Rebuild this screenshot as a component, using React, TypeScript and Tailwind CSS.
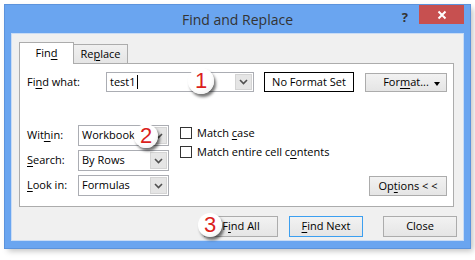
import React from 'react';

function Chevron() {
  return (
    <svg width="9" height="6" viewBox="0 0 9 6" fill="none">
      <path d="M1 1l3.5 3.5L8 1" stroke="#505050" strokeWidth="1.6" />
    </svg>
  );
}

function Combo({ value, width, height, caret }: { value: string; width: string; height: string; caret?: boolean }) {
  return (
    <div className={`${width} ${height} flex bg-white border border-[#abadb3]`}>
      <div className="flex-1 flex items-center pl-[3px] text-black">
        {value}
        {caret && <span className="ml-[1px] w-px h-[14px] bg-black" />}
      </div>
      <div className="w-[17px] my-[1px] mr-[1px] flex items-center justify-center bg-[#e5e5e5] border border-[#d4d4d4]">
        <Chevron />
      </div>
    </div>
  );
}

function Button({ children, className, primary }: { children: React.ReactNode; className: string; primary?: boolean }) {
  return (
    <div
      className={`${className} flex items-center justify-center bg-gradient-to-b from-[#f2f2f2] to-[#e5e5e5] border ${
        primary ? 'border-[#3c9ff0]' : 'border-[#acacac]'
      }`}
    >
      {children}
    </div>
  );
}

function Badge({ n, className }: { n: string; className: string }) {
  return (
    <div
      className={`absolute ${className} rounded-full flex items-center justify-center bg-[radial-gradient(circle_at_40%_35%,#ffffff_55%,#e6e6e6)] shadow-[2px_3px_3px_rgba(0,0,0,0.55)] font-['Liberation_Sans',sans-serif] text-[22px] leading-none text-[#db1f1d]`}
    >
      {n}
    </div>
  );
}

export default function App() {
  return (
    <div className="relative w-[475px] h-[260px] bg-white pt-[5px] pl-[5px] font-['Open_Sans',sans-serif] text-[11px] text-black">
      <div className="w-[465px] h-[243px] flex flex-col bg-[#6aa5f0] shadow-[0_0_0_1px_#5c93dc,3px_3px_6px_rgba(0,0,0,0.25)]">
        {/* title bar */}
        <div className="h-[29px] grid grid-cols-[1fr_auto_1fr]">
          <div />
          <div className="flex items-center text-[14px] text-[#333]">Find and Replace</div>
          <div className="flex justify-end items-start">
            <span className="mt-[3px] mr-[11px] text-[13px] font-bold text-[#333]">?</span>
            <div className="w-[45px] h-[19px] mr-[6px] bg-[#c75050] flex items-center justify-center">
              <svg width="10" height="10" viewBox="0 0 10 10">
                <path d="M1.5 1.5l7 7M8.5 1.5l-7 7" stroke="white" strokeWidth="2" />
              </svg>
            </div>
          </div>
        </div>

        {/* body */}
        <div className="mx-[7px] h-[206px] flex flex-col bg-[#f0f0f0] shadow-[0_0_0_1px_#c9dcf5]">
          <div className="pt-[8px] pl-[7px] flex items-end">
            <div className="relative z-10 -mb-px w-[55px] h-[22px] flex items-center justify-center bg-white border border-b-0 border-[#acacac]">
              Fin<u className="underline-offset-2">d</u>
            </div>
            <div className="w-[54px] h-[19px] flex items-center justify-center bg-gradient-to-b from-[#f0f0f0] to-[#e5e5e5] border border-l-0 border-b-0 border-[#acacac]">
              Re<u className="underline-offset-2">p</u>lace
            </div>
          </div>

          <div className="ml-[7px] w-[435px] h-[144px] flex flex-col bg-white border border-[#acacac]">
            <div className="pt-[8px] pl-[7px] flex items-center">
              <div className="w-[79px]">
                Fi<u className="underline-offset-2">n</u>d what:
              </div>
              <Combo value="test1" width="w-[148px]" height="h-[20px]" caret />
              <div className="ml-[10px] w-[90px] h-[20px] flex items-center justify-center border border-black">
                No Format Set
              </div>
              <Button className="ml-[11px] w-[82px] h-[19px] relative">
                For<u className="underline-offset-2">m</u>at...
                <span className="absolute right-[6px] top-[8px] border-x-[3px] border-t-[4px] border-x-transparent border-t-black" />
              </Button>
            </div>

            <div className="mt-[33px] pl-[7px] flex">
              <div className="flex flex-col gap-[4px]">
                {[
                  ['Wit', 'h', 'in:', 'Workbook'],
                  ['', 'S', 'earch:', 'By Rows'],
                  ['', 'L', 'ook in:', 'Formulas'],
                ].map(([a, u, b, v]) => (
                  <div key={v} className="flex items-center">
                    <div className="w-[51px]">
                      {a}
                      <u className="underline-offset-2">{u}</u>
                      {b}
                    </div>
                    <Combo value={v} width="w-[91px]" height="h-[21px]" />
                  </div>
                ))}
              </div>

              <div className="flex-1 ml-[11px] flex flex-col">
                <div className="h-[16px] flex items-center">
                  <span className="w-[12px] h-[12px] border border-[#333] bg-white" />
                  <span className="ml-[5px]">
                    Match <u className="underline-offset-2">c</u>ase
                  </span>
                </div>
                <div className="mt-[3px] h-[16px] flex items-center">
                  <span className="w-[12px] h-[12px] border border-[#333] bg-white" />
                  <span className="ml-[5px]">
                    Match entire cell c<u className="underline-offset-2">o</u>ntents
                  </span>
                </div>
                <Button className="mt-auto self-end mr-[6px] w-[78px] h-[20px]">
                  Op<u className="underline-offset-2">t</u>ions &lt; &lt;
                </Button>
              </div>
            </div>
          </div>

          <div className="mt-[9px] pr-[6px] flex justify-end">
            <Button className="w-[74px] h-[21px]">
              F<u className="underline-offset-2">i</u>nd All
            </Button>
            <Button className="ml-[11px] w-[74px] h-[21px]" primary>
              <u className="underline-offset-2">F</u>ind Next
            </Button>
            <Button className="ml-[20px] w-[74px] h-[21px]">Close</Button>
          </div>
        </div>
      </div>

      <Badge n="1" className="left-[188px] top-[68px] w-[26px] h-[26px]" />
      <Badge n="2" className="left-[134px] top-[124px] w-[24px] h-[24px]" />
      <Badge n="3" className="left-[198px] top-[213px] w-[24px] h-[24px]" />
    </div>
  );
}
